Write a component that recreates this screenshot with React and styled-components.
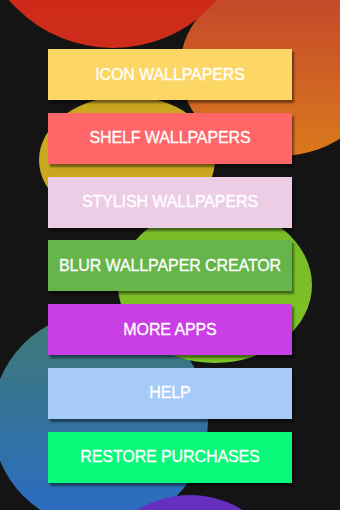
import React from 'react';
import styled, { createGlobalStyle } from 'styled-components';

const GlobalStyle = createGlobalStyle`
  html, body {
    margin: 0;
    padding: 0;
    background: #141414;
  }
  body {
    font-family: 'Liberation Sans', Arial, sans-serif;
  }
`;

const Screen = styled.div`
  position: relative;
  width: 340px;
  height: 510px;
  overflow: hidden;
  background: #141414;
`;

// decorative blobs behind the menu
const Backdrop = styled.svg`
  position: absolute;
  top: 0;
  left: 0;
  width: 340px;
  height: 510px;
  z-index: 0;
`;

const Menu = styled.nav`
  position: relative;
  z-index: 1;
  display: flex;
  flex-direction: column;
  align-items: center;
  gap: 12.8px;
  padding-top: 49px;
`;

const MenuButton = styled.button`
  width: 244px;
  height: 51px;
  border: 0;
  border-radius: 0;
  padding: 0;
  background: ${p => p.$bg};
  color: #ffffff;
  font-family: 'Liberation Sans', Arial, sans-serif;
  font-size: 16px;
  letter-spacing: -0.1px;
  -webkit-text-stroke: 0.3px #ffffff;
  text-align: center;
  box-shadow: 2px 3px 2px rgba(0, 0, 0, 0.45);
  cursor: pointer;
`;

const items = [
  { label: 'ICON WALLPAPERS', bg: '#fdd765' },
  { label: 'SHELF WALLPAPERS', bg: '#fe6667' },
  { label: 'STYLISH WALLPAPERS', bg: '#edcde6' },
  { label: 'BLUR WALLPAPER CREATOR', bg: '#66b54a' },
  { label: 'MORE APPS', bg: '#ca3ee5' },
  { label: 'HELP', bg: '#a7cbf9' },
  { label: 'RESTORE PURCHASES', bg: '#0af97b' },
];

function Blobs() {
  return (
    <Backdrop viewBox="0 0 340 510" aria-hidden="true">
      <defs>
        <linearGradient id="orange" x1="0" y1="0" x2="0" y2="1">
          <stop offset="0" stopColor="#c2432b" />
          <stop offset="1" stopColor="#da7a1d" />
        </linearGradient>
        <linearGradient id="red" x1="0" y1="0" x2="0" y2="1">
          <stop offset="0.5" stopColor="#c9241a" />
          <stop offset="1" stopColor="#cf2d1b" />
        </linearGradient>
        <linearGradient id="teal" x1="0" y1="0" x2="0" y2="1">
          <stop offset="0" stopColor="#3e7a72" />
          <stop offset="1" stopColor="#2a6bc8" />
        </linearGradient>
        <linearGradient id="lime" x1="0" y1="0" x2="0" y2="1">
          <stop offset="0" stopColor="#78bd2b" />
          <stop offset="1" stopColor="#7dc224" />
        </linearGradient>
      </defs>
      <ellipse cx="127" cy="160" rx="88" ry="64" fill="#c9a71e" />
      <ellipse cx="280" cy="68" rx="100" ry="88" fill="url(#orange)" />
      <circle cx="113" cy="-89" r="137" fill="url(#red)" />
      <circle cx="100" cy="420" r="108" fill="url(#teal)" />
      <ellipse cx="215" cy="285" rx="97" ry="78" fill="url(#lime)" />
      <circle cx="190" cy="595" r="100" fill="#6530c0" />
    </Backdrop>
  );
}

export default function App() {
  return (
    <>
      <GlobalStyle />
      <Screen>
        <Blobs />
        <Menu>
          {items.map(item => (
            <MenuButton key={item.label} $bg={item.bg}>
              {item.label}
            </MenuButton>
          ))}
        </Menu>
      </Screen>
    </>
  );
}
